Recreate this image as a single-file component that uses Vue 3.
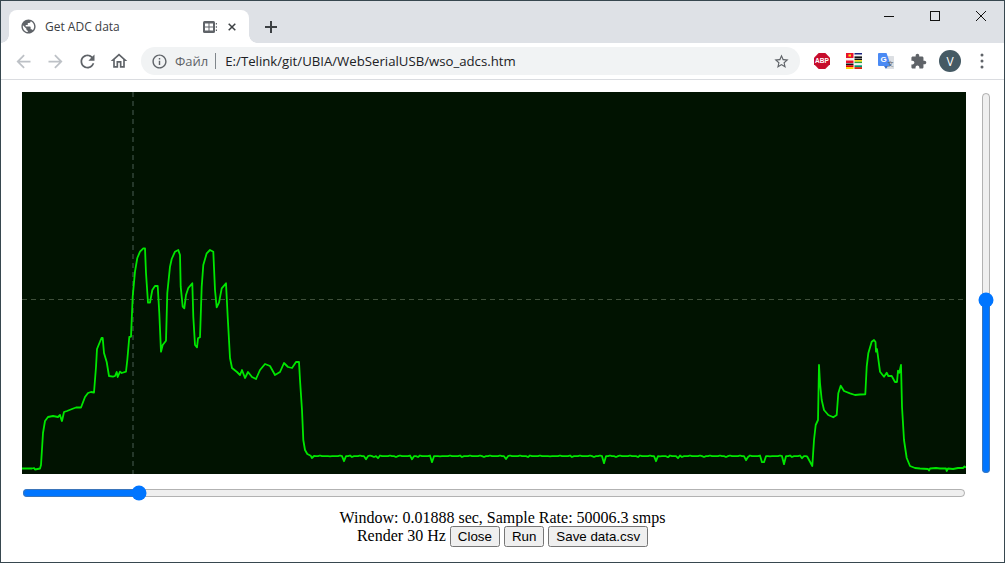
<template>
  <div class="window">
    <header class="tabstrip">
      <div class="tab">
        <svg class="favicon" viewBox="0 0 24 24"><path :d="icons.globe" /></svg>
        <span class="tab-title">Get ADC data</span>
        <svg class="tab-media" viewBox="0 0 14 12">
          <rect x="0" y="0" width="12" height="12" rx="1.500" fill="#5f6368" />
          <path d="M2 2.500h3.500V5.500H2zM6.500 2.500H10V5.500H6.500zM2 6.500h3.500V9.500H2zM6.500 6.500H10V9.500H6.500z" fill="#fff" />
          <path d="M12.800 2h1.200v1.500h-1.200zM12.800 5.200h1.200v1.500h-1.200zM12.800 8.500h1.200V10h-1.200z" fill="#5f6368" />
        </svg>
        <svg class="tab-close" viewBox="0 0 8 8"><path d="M.7.7l6.600 6.600M7.300.7L.7 7.300" /></svg>
      </div>
      <svg class="new-tab" viewBox="0 0 12 12"><path d="M6 0v12M0 6h12" /></svg>
      <div class="win-controls">
        <svg viewBox="0 0 46 30"><path d="M18 15.500h10" /></svg>
        <svg viewBox="0 0 46 30"><rect x="18.500" y="10.500" width="9" height="9" /></svg>
        <svg viewBox="0 0 46 30"><path d="M18 10l10 10M28 10L18 20" /></svg>
      </div>
    </header>

    <nav class="toolbar">
      <div class="tool"><svg class="ic21 off" viewBox="0 0 24 24"><path :d="icons.back" /></svg></div>
      <div class="tool"><svg class="ic21 off" viewBox="0 0 24 24"><path :d="icons.forward" /></svg></div>
      <div class="tool"><svg class="ic21" viewBox="0 0 24 24"><path :d="icons.reload" /></svg></div>
      <div class="tool"><svg class="ic20" viewBox="0 0 24 24"><path :d="icons.home" /></svg></div>
      <div class="omnibox">
        <svg class="ic17" viewBox="0 0 24 24"><path :d="icons.info" /></svg>
        <span class="scheme">Файл</span>
        <span class="sep"></span>
        <span class="url">E:/Telink/git/UBIA/WebSerialUSB/wso_adcs.htm</span>
        <svg class="ic17 star" viewBox="0 0 24 24"><path :d="icons.star" /></svg>
      </div>
      <div class="tool">
        <svg class="ext" viewBox="0 0 17 17">
          <path d="M5 0h7l5 5v7l-5 5H5l-5-5V5z" fill="#c70d2c" />
          <text x="8.500" y="11" text-anchor="middle" class="abp">ABP</text>
        </svg>
      </div>
      <div class="tool">
        <svg class="ext" viewBox="0 0 16 16">
          <rect x="0" y="0" width="7.500" height="5" fill="#e8112d" />
          <rect x="2.500" y="1.500" width="2.500" height="2" fill="#f7e017" />
          <rect x="0" y="5" width="7.500" height="2.500" fill="#f4f0f0" />
          <rect x="0" y="7.500" width="7.500" height="2.500" fill="#e8112d" />
          <rect x="0" y="10.500" width="7.500" height="1.800" fill="#111" />
          <rect x="0" y="12.300" width="7.500" height="1.800" fill="#dd0000" />
          <rect x="0" y="14.100" width="7.500" height="1.900" fill="#ffce00" />
          <rect x="8.500" y="0" width="7.500" height="1.700" fill="#1a237e" />
          <rect x="8.500" y="1.700" width="7.500" height="1.700" fill="#f4f4f4" />
          <rect x="8.500" y="3.400" width="7.500" height="1.600" fill="#111" />
          <rect x="8.500" y="5.500" width="7.500" height="1.600" fill="#111" />
          <rect x="8.500" y="7.100" width="7.500" height="1.600" fill="#ffd500" />
          <rect x="8.500" y="8.700" width="7.500" height="1.500" fill="#2e9e3e" />
          <rect x="8.500" y="10.500" width="7.500" height="1.800" fill="#f4f4f4" />
          <rect x="8.500" y="12.300" width="7.500" height="1.800" fill="#00966e" />
          <rect x="8.500" y="14.100" width="7.500" height="1.900" fill="#d62612" />
        </svg>
      </div>
      <div class="tool">
        <svg class="ext" viewBox="0 0 16 16">
          <path d="M7 3h8.500a.5.500 0 0 1 .5.500V15.500a.5.500 0 0 1-.5.500H9z" fill="#dcdfe3" />
          <path d="M1 0h7.500L13 13H6l-1 0H1a1 1 0 0 1-1-1V1a1 1 0 0 1 1-1z" fill="#4a8af4" />
          <path d="M6 13h4l-2 3z" fill="#3a6fc9" />
          <text x="5.500" y="9" text-anchor="middle" class="gt">G</text>
          <text x="12.500" y="12.500" text-anchor="middle" class="gt2">文</text>
        </svg>
      </div>
      <div class="tool"><svg class="ic17" viewBox="0 0 24 24"><path :d="icons.puzzle" /></svg></div>
      <div class="tool"><div class="avatar">V</div></div>
      <div class="tool">
        <svg class="menu" viewBox="0 0 4 16"><circle cx="2" cy="2" r="1.500" /><circle cx="2" cy="8" r="1.500" /><circle cx="2" cy="14" r="1.500" /></svg>
      </div>
    </nav>

    <main class="page">
      <div class="scope-row">
        <div class="scope-col">
          <svg class="scope" viewBox="22 92 944 382">
            <line x1="22" y1="299.500" x2="966" y2="299.500" class="grat" />
            <line x1="133" y1="92" x2="133" y2="474" class="grat-v" />
            <polyline :points="tracePoints" class="trace" />
          </svg>
          <input class="hslider" type="range" min="0" max="1000" value="117" />
        </div>
        <input class="vslider" type="range" min="0" max="1000" value="453" />
      </div>
      <div class="info">
        <div>Window: 0.01888 sec, Sample Rate: 50006.3 smps</div>
        <div class="actions">Render 30 Hz <button>Close</button> <button>Run</button> <button>Save data.csv</button></div>
      </div>
    </main>
  </div>
</template>

<script setup>
import { computed } from 'vue';

const icons = {
  globe: 'M12 2C6.48 2 2 6.48 2 12s4.48 10 10 10 10-4.48 10-10S17.52 2 12 2zm-1 17.930c-3.950-.49-7-3.850-7-7.930 0-.62.080-1.210.21-1.790L9 15v1c0 1.100.9 2 2 2v1.930zm6.900-2.540c-.26-.81-1-1.390-1.900-1.390h-1v-3c0-.55-.45-1-1-1H8v-2h2c.55 0 1-.45 1-1V7h2c1.100 0 2-.9 2-2v-.41c2.930 1.190 5 4.060 5 7.410 0 2.080-.8 3.970-2.100 5.390z',
  back: 'M20 11H7.830l5.590-5.590L12 4l-8 8 8 8 1.410-1.410L7.830 13H20v-2z',
  forward: 'M12 4l-1.410 1.410L16.170 11H4v2h12.170l-5.580 5.590L12 20l8-8z',
  reload: 'M17.650 6.350C16.200 4.900 14.210 4 12 4c-4.420 0-7.990 3.580-7.990 8s3.570 8 7.990 8c3.730 0 6.840-2.550 7.730-6h-2.080c-.82 2.330-3.040 4-5.650 4-3.310 0-6-2.690-6-6s2.690-6 6-6c1.660 0 3.140.69 4.220 1.780L13 11h7V4l-2.350 2.350z',
  home: 'M12 5.690l5 4.500V18h-2v-6H9v6H7v-7.810l5-4.500M12 3L2 12h3v8h6v-6h2v6h6v-8h3L12 3z',
  info: 'M11 7h2v2h-2zm0 4h2v6h-2zm1-9C6.480 2 2 6.480 2 12s4.480 10 10 10 10-4.480 10-10S17.520 2 12 2zm0 18c-4.410 0-8-3.590-8-8s3.590-8 8-8 8 3.590 8 8-3.590 8-8 8z',
  star: 'M22 9.240l-7.190-.62L12 2 9.190 8.630 2 9.240l5.460 4.730L5.820 21 12 17.270 18.180 21l-1.630-7.030L22 9.240zM12 15.400l-3.760 2.270 1-4.280-3.320-2.880 4.380-.38L12 6.100l1.710 4.040 4.380.38-3.320 2.880 1 4.280L12 15.400z',
  puzzle: 'M20.500 11H19V7c0-1.100-.9-2-2-2h-4V3.500C13 2.120 11.880 1 10.500 1S8 2.120 8 3.500V5H4c-1.100 0-1.990.9-1.990 2v3.800H3.500c1.490 0 2.700 1.210 2.700 2.700s-1.210 2.700-2.700 2.700H2V20c0 1.100.9 2 2 2h3.800v-1.500c0-1.490 1.210-2.700 2.700-2.700 1.490 0 2.700 1.210 2.700 2.700V22H17c1.100 0 2-.9 2-2v-4h1.500c1.380 0 2.500-1.120 2.500-2.500S21.880 11 20.500 11z',
};

// first burst, read off the screenshot (page coordinates)
const burstA = [
  [22, 468.5], [32, 468.5], [34, 468], [35, 469.5], [40, 468.5], [41, 465], [43, 433], [45, 421], [48, 417], [53, 416], [58, 417], [60, 415],
  [61.5, 420], [62, 421], [64, 412], [67, 411], [72, 409], [76, 407.5], [81, 407.5], [85, 397], [88, 393], [91, 392], [94, 392.5],
  [96, 367], [97, 349], [101.5, 338], [102.7, 338], [104, 353], [106.7, 362], [109, 376], [113, 376.7], [115, 376], [116.7, 372],
  [117.7, 377], [120, 371.7], [121.7, 373], [126, 371.7], [127.3, 360], [129.3, 337], [131, 336.7], [132.7, 296.7], [135, 271.7],
  [137.3, 258], [140, 251.7], [143.3, 248.3], [145, 248.3], [146, 273], [148, 302.7], [150, 302.7], [152.3, 290], [155, 286],
  [157.7, 286], [159.3, 313], [161, 351.7], [162.7, 345], [166, 340.7], [167.3, 293], [170, 266.7], [171.7, 259], [175, 251.7],
  [178.3, 250], [180, 255], [180.7, 286.7], [182.7, 306.7], [184.3, 308.3], [186, 295], [188.3, 288], [192.3, 283.3], [193.3, 316.7],
  [195, 345], [197, 347.3], [198, 338.3], [200, 337.3], [201.7, 286.7], [203.3, 265], [206.7, 253.3], [210, 250], [213.3, 251.7],
  [215, 290], [216.7, 307.3], [219, 302.7], [221.7, 288.3], [226, 283.3], [227.7, 316.7], [230, 358], [232, 368], [237, 372],
  [240, 375], [242, 370], [245, 378], [248, 372], [252, 377], [256, 379], [260, 370], [265, 364], [270, 366], [275, 375], [280, 372],
  [284, 363], [288, 367], [292, 368], [296, 362], [299, 362], [300, 380], [302, 410], [303.3, 440], [305, 450], [307.3, 454],
  [310.7, 455.7], [312, 458], [314, 456],
];

// small dropouts on the flat stretch: [x, depth below the baseline]
const dips = {
  344: 5, 367: 3, 378: 2, 412: 3, 433: 6, 506: 2, 604: 7, 656: 5, 668: 1, 678: 2, 746: 4, 762: 6, 764: 6, 785: 8, 803: 2,
};

const flat = computed(() => {
  const pts = [];
  for (let x = 316; x < 807; x += 2) {
    const wobble = ((x * 7) % 5 === 0 ? -0.7 : 0) + ((x * 3) % 11 === 0 ? 0.8 : 0);
    const dip = dips[x] || dips[x + 1] || 0;
    pts.push([x, 456.2 + wobble + dip]);
  }
  return pts;
});

const burstB = [
  [807.3, 456.7], [810, 461.7], [812.3, 466], [814, 440], [815.7, 425], [818, 420], [819, 365], [820, 383], [821.7, 400], [824, 410],
  [828.3, 415], [833.3, 417.3], [836.7, 415], [838.3, 393.3], [840.7, 385.7], [844, 391], [850, 393.3], [855, 395], [860, 394.5],
  [865.3, 394.3], [866.7, 366.7], [868.3, 353.3], [871.7, 341.7], [874, 340], [875.5, 342], [876, 351.7], [877, 349], [880, 371.7],
  [884, 376.7], [886.7, 372.7], [888.3, 376], [891.7, 376], [895, 382], [897, 382], [898, 370.7], [899.3, 372.7], [901, 365],
  [902, 406.7], [904, 440], [906.7, 458], [910, 466], [915, 468], [920, 468.5], [928, 469], [929, 470.5], [930, 468.5], [936, 468],
  [940, 468.5], [946, 468.5], [946.7, 471], [948, 468.5], [953, 469], [958, 468], [963, 468], [964.5, 466.5], [966, 467.5],
];

const tracePoints = computed(() =>
  [...burstA, ...flat.value, ...burstB].map(([x, y]) => `${x},${y}`).join(' ')
);
</script>

<style>
html, body {
  margin: 0;
  background: #fff;
}
</style>

<style scoped>
.window {
  box-sizing: border-box;
  width: 1005px;
  height: 563px;
  border: 1px solid #37474f;
  display: flex;
  flex-direction: column;
  overflow: hidden;
  background: #fff;
}

.tabstrip {
  height: 42px;
  flex: none;
  background: #dee1e6;
  display: flex;
  align-items: flex-end;
  padding-left: 8px;
}

.tab {
  position: relative;
  width: 240px;
  height: 33px;
  box-sizing: border-box;
  background: #fff;
  border-radius: 8px 8px 0 0;
  display: flex;
  align-items: center;
  padding: 0 0 0 11px;
  font-family: "Open Sans", "Noto Sans", sans-serif;
}

.tab::before,
.tab::after {
  content: "";
  position: absolute;
  bottom: 0;
  width: 8px;
  height: 8px;
}

.tab::before {
  left: -8px;
  background: radial-gradient(circle at 0 0, #dee1e6 7.500px, #fff 8px);
}

.tab::after {
  right: -8px;
  background: radial-gradient(circle at 100% 0, #dee1e6 7.500px, #fff 8px);
}

.favicon {
  width: 17px;
  height: 17px;
  fill: #5f6368;
  flex: none;
}

.tab-title {
  font-size: 12px;
  color: #3c4043;
  margin-left: 8px;
  width: 158px;
  white-space: nowrap;
}

.tab-media {
  width: 14px;
  height: 12px;
  flex: none;
  margin-right: 11px;
}

.tab-close {
  width: 8px;
  height: 8px;
  flex: none;
  stroke: #3c4043;
  stroke-width: 1.500;
  fill: none;
}

.new-tab {
  width: 12px;
  height: 12px;
  margin: 0 0 10px 16px;
  stroke: #3c4043;
  stroke-width: 2;
  fill: none;
}

.win-controls {
  margin-left: auto;
  align-self: flex-start;
  display: flex;
}

.win-controls svg {
  width: 46px;
  height: 30px;
  stroke: #111;
  stroke-width: 1;
  fill: none;
}

.toolbar {
  height: 37px;
  flex: none;
  box-sizing: border-box;
  border-bottom: 1px solid #dadce0;
  display: flex;
  align-items: center;
  padding: 0 6px;
}

.tool {
  width: 32px;
  height: 28px;
  flex: none;
  display: flex;
  align-items: center;
  justify-content: center;
}

.tool svg,
.omnibox svg {
  fill: #5f6368;
}

.ic21 {
  width: 21px;
  height: 21px;
}

.ic20 {
  width: 20px;
  height: 20px;
}

.ic17 {
  width: 17px;
  height: 17px;
  flex: none;
}

.tool svg.off {
  fill: #bdc1c6;
}

.omnibox {
  flex: 1;
  height: 28px;
  margin: 0 6px;
  padding: 0 10px;
  box-sizing: border-box;
  background: #f1f3f4;
  border-radius: 14px;
  display: flex;
  align-items: center;
  font-family: "Open Sans", "Noto Sans", sans-serif;
  font-size: 13.200px;
  white-space: nowrap;
}

.scheme {
  color: #5f6368;
  font-size: 13px;
  margin-left: 7px;
}

.sep {
  width: 1px;
  height: 16px;
  background: #80868b;
  margin: 0 9px 0 7px;
}

.url {
  color: #202124;
}

.star {
  margin-left: auto;
}

.ext {
  width: 16px;
  height: 16px;
}

.abp {
  font: bold 7px "Liberation Sans", sans-serif;
  fill: #fff;
}

.gt {
  font: bold 8px "Liberation Sans", sans-serif;
  fill: #fff;
}

.gt2 {
  font: 6px "Noto Sans CJK SC", sans-serif;
  fill: #5f6368;
}

.avatar {
  width: 22px;
  height: 22px;
  border-radius: 50%;
  background: #455a64;
  color: #fff;
  font: 12px "Open Sans", sans-serif;
  display: flex;
  align-items: center;
  justify-content: center;
}

.menu {
  width: 4px;
  height: 16px;
}

.page {
  flex: 1;
  padding-top: 12px;
  font-family: "Liberation Serif", serif;
  font-size: 16px;
  color: #000;
}

.scope-row {
  display: flex;
  padding-left: 21px;
}

.scope-col {
  width: 944px;
  flex: none;
}

.scope {
  display: block;
  width: 944px;
  height: 382px;
  background: #011301;
}

.grat {
  stroke: #3f4f3a;
  stroke-width: 1;
  stroke-dasharray: 5 4;
}

.grat-v {
  stroke: #25382a;
  stroke-width: 2;
  stroke-dasharray: 5 4;
}

.trace {
  fill: none;
  stroke: #00e600;
  stroke-width: 1.800;
  stroke-linejoin: round;
}

.hslider {
  display: block;
  width: 944px;
  height: 16px;
  margin: 11px 0 0;
}

.vslider {
  writing-mode: vertical-lr;
  direction: rtl;
  width: 16px;
  height: 382px;
  margin: 0 0 0 12px;
}

.info {
  text-align: center;
  margin-top: 7px;
  line-height: 19px;
}

.actions {
  margin-top: -1px;
}

button {
  font-family: "Liberation Sans", sans-serif;
  font-size: 13.333px;
}
</style>
